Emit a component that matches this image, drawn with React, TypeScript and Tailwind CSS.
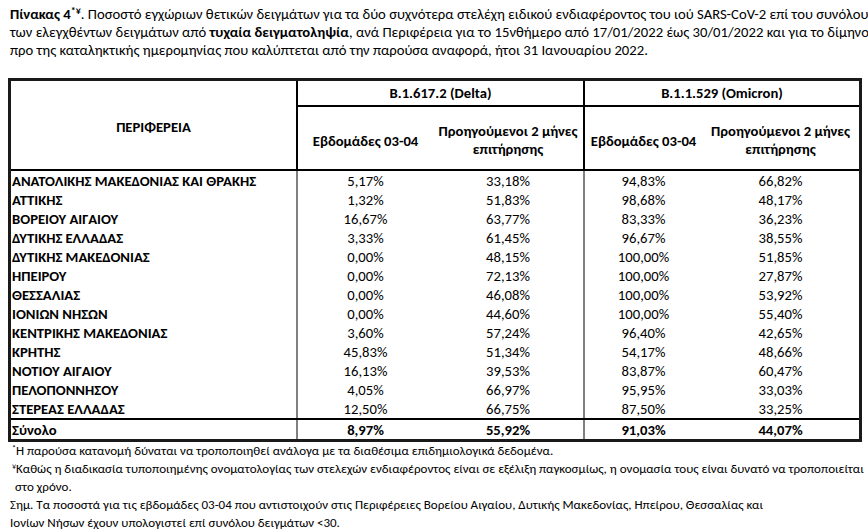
import React from "react";

const rows: string[][] = [
  ["ΑΝΑΤΟΛΙΚΗΣ ΜΑΚΕΔΟΝΙΑΣ ΚΑΙ ΘΡΑΚΗΣ", "5,17%", "33,18%", "94,83%", "66,82%"],
  ["ΑΤΤΙΚΗΣ", "1,32%", "51,83%", "98,68%", "48,17%"],
  ["ΒΟΡΕΙΟΥ ΑΙΓΑΙΟΥ", "16,67%", "63,77%", "83,33%", "36,23%"],
  ["ΔΥΤΙΚΗΣ ΕΛΛΑΔΑΣ", "3,33%", "61,45%", "96,67%", "38,55%"],
  ["ΔΥΤΙΚΗΣ ΜΑΚΕΔΟΝΙΑΣ", "0,00%", "48,15%", "100,00%", "51,85%"],
  ["ΗΠΕΙΡΟΥ", "0,00%", "72,13%", "100,00%", "27,87%"],
  ["ΘΕΣΣΑΛΙΑΣ", "0,00%", "46,08%", "100,00%", "53,92%"],
  ["ΙΟΝΙΩΝ ΝΗΣΩΝ", "0,00%", "44,60%", "100,00%", "55,40%"],
  ["ΚΕΝΤΡΙΚΗΣ ΜΑΚΕΔΟΝΙΑΣ", "3,60%", "57,24%", "96,40%", "42,65%"],
  ["ΚΡΗΤΗΣ", "45,83%", "51,34%", "54,17%", "48,66%"],
  ["ΝΟΤΙΟΥ ΑΙΓΑΙΟΥ", "16,13%", "39,53%", "83,87%", "60,47%"],
  ["ΠΕΛΟΠΟΝΝΗΣΟΥ", "4,05%", "66,97%", "95,95%", "33,03%"],
  ["ΣΤΕΡΕΑΣ ΕΛΛΑΔΑΣ", "12,50%", "66,75%", "87,50%", "33,25%"],
];

const cols = "grid grid-cols-[287px_135px_152px_117px_157px]";

function Row({ r, bold }: { r: string[]; bold?: boolean }) {
  return (
    <div className={`${cols} h-[19px] items-stretch`}>
      <div className="border-r-2 border-[#808080] pl-[1px] font-bold flex items-center whitespace-nowrap">
        {r[0]}
      </div>
      <div className={`flex items-center justify-center ${bold ? "font-bold" : ""}`}>{r[1]}</div>
      <div className={`border-r-2 border-[#808080] flex items-center justify-center ${bold ? "font-bold" : ""}`}>
        {r[2]}
      </div>
      <div className={`flex items-center justify-center ${bold ? "font-bold" : ""}`}>{r[3]}</div>
      <div className={`flex items-center justify-center ${bold ? "font-bold" : ""}`}>{r[4]}</div>
    </div>
  );
}

export default function App() {
  return (
    <div
      className="w-[868px] h-[531px] bg-white text-black text-[14.67px] leading-[18px] overflow-hidden"
      style={{ fontFamily: "Carlito, 'Open Sans', sans-serif" }}
    >
      <div className="pt-[5px] pl-[10px] whitespace-nowrap">
        <span className="font-bold">
          Πίνακας 4<sup className="text-[10px]">*¥</sup>
        </span>
        . Ποσοστό εγχώριων θετικών δειγμάτων για τα δύο συχνότερα στελέχη ειδικού ενδιαφέροντος του ιού SARS-CoV-2 επί του συνόλου
        <br />
        των ελεγχθέντων δειγμάτων από <span className="font-bold">τυχαία δειγματοληψία</span>, ανά Περιφέρεια για το 15νθήμερο από 17/01/2022 έως 30/01/2022 και για το δίμηνο
        <br />
        προ της καταληκτικής ημερομηνίας που καλύπτεται από την παρούσα αναφορά, ήτοι 31 Ιανουαρίου 2022.
      </div>

      <div className="ml-[8px] mt-[19px] w-[854px] border-[3px] border-[#1a1a1a]">
        {/* header */}
        <div className={`${cols} grid-rows-[26px_62px] border-b-2 border-black font-bold`}>
          <div className="row-span-2 border-r-2 border-black flex items-center justify-center pt-[3px]">
            ΠΕΡΙΦΕΡΕΙΑ
          </div>
          <div className="col-span-2 border-r-2 border-b-2 border-black flex items-center justify-center">
            B.1.617.2 (Delta)
          </div>
          <div className="col-span-2 border-b-2 border-black flex items-center justify-center">
            B.1.1.529 (Omicron)
          </div>
          <div className="flex items-center justify-center pt-[5px]">Εβδομάδες 03-04</div>
          <div className="border-r-2 border-black flex items-center justify-center text-center pt-[3px]">
            Προηγούμενοι 2 μήνες
            <br />
            επιτήρησης
          </div>
          <div className="flex items-center justify-center pt-[5px] whitespace-nowrap">Εβδομάδες 03-04</div>
          <div className="flex items-center justify-center text-center pt-[3px]">
            Προηγούμενοι 2 μήνες
            <br />
            επιτήρησης
          </div>
        </div>
        {/* body */}
        <div className="flex flex-col">
          {rows.map((r) => (
            <Row key={r[0]} r={r} />
          ))}
        </div>
        <div className="border-t-2 border-black">
          <Row r={["Σύνολο", "8,97%", "55,92%", "91,03%", "44,07%"]} bold />
        </div>
      </div>

      <div className="pl-[10px] whitespace-nowrap text-[13px]">
        <div className="pl-[2px]">
          <sup className="text-[8px]">*</sup>Η παρούσα κατανομή δύναται να τροποποιηθεί ανάλογα με τα διαθέσιμα επιδημιολογικά δεδομένα.
        </div>
        <div className="pl-[2px]">
          <sup className="text-[8px]">¥</sup>Καθώς η διαδικασία τυποποιημένης ονοματολογίας των στελεχών ενδιαφέροντος είναι σε εξέλιξη παγκοσμίως, η ονομασία τους είναι δυνατό να τροποποιείται
        </div>
        <div className="pl-[5px]">στο χρόνο.</div>
        <div>
          Σημ. Τα ποσοστά για τις εβδομάδες 03-04 που αντιστοιχούν στις Περιφέρειες Βορείου Αιγαίου, Δυτικής Μακεδονίας, Ηπείρου, Θεσσαλίας και
        </div>
        <div>Ιονίων Νήσων έχουν υπολογιστεί επί συνόλου δειγμάτων &lt;30.</div>
      </div>
    </div>
  );
}
